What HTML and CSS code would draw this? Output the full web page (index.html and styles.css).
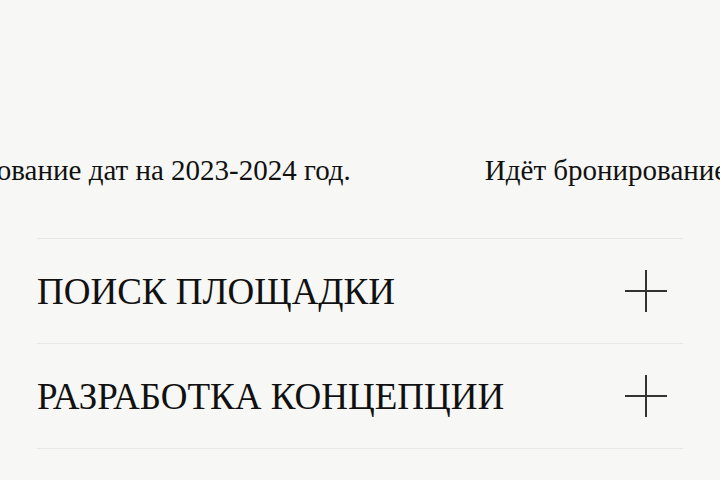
FILE: index.html
```html
<!DOCTYPE html>
<html lang="ru">
<head>
<meta charset="utf-8">
<title>Услуги</title>
<link rel="stylesheet" href="styles.css">
</head>
<body>
<div class="page">
  <div class="ticker">
    <div class="ticker-track">
      <span class="ticker-item">Идёт бронирование дат на 2023-2024 год.</span>
      <span class="ticker-item">Идёт бронирование дат на 2023-2024 год.</span>
      <span class="ticker-item">Идёт бронирование дат на 2023-2024 год.</span>
    </div>
  </div>
  <ul class="services">
    <li class="service">
      <span class="service-title">ПОИСК ПЛОЩАДКИ</span>
      <svg class="service-toggle" viewBox="0 0 42 42" aria-hidden="true"><path d="M0 21H42M21 0V42"/></svg>
    </li>
    <li class="service">
      <span class="service-title">РАЗРАБОТКА КОНЦЕПЦИИ</span>
      <svg class="service-toggle" viewBox="0 0 42 42" aria-hidden="true"><path d="M0 21H42M21 0V42"/></svg>
    </li>
    <li class="service">
      <span class="service-title">ОРГАНИЗАЦИЯ</span>
      <svg class="service-toggle" viewBox="0 0 42 42" aria-hidden="true"><path d="M0 21H42M21 0V42"/></svg>
    </li>
  </ul>
</div>
</body>
</html>
```
FILE: styles.css
```css
html, body {
  margin: 0;
  padding: 0;
  background: #f7f7f5;
  color: #111;
  font-family: "Liberation Serif", "Times New Roman", serif;
  overflow: hidden;
}

.page {
  padding-top: 150px;
}

.ticker {
  overflow: hidden;
  white-space: nowrap;
  height: 40px;
}

/* running line, shown at its current scroll offset */
.ticker-track {
  display: flex;
  gap: 134px;
  transform: translateX(-161px);
}

.ticker-item {
  font-size: 29px;
  line-height: 40px;
}

.services {
  list-style: none;
  margin: 48px 37px 0;
  padding: 0;
}

.service {
  display: flex;
  align-items: center;
  justify-content: space-between;
  height: 104px;
  border-top: 1px solid #e8e8e6;
}

.service-title {
  font-size: 37px;
  line-height: 1;
}

.service-toggle {
  width: 42px;
  height: 42px;
  margin-right: 16px;
  fill: none;
  stroke: #333;
  stroke-width: 2;
}
```
